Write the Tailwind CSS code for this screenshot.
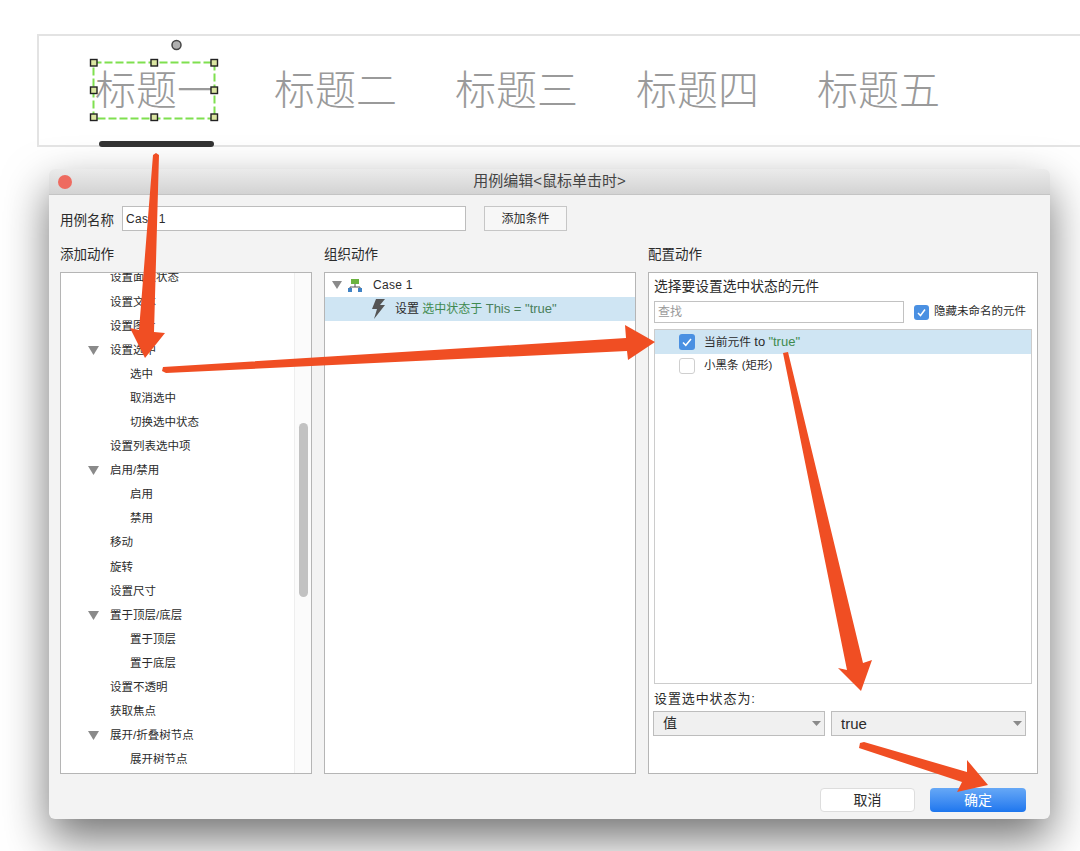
<!DOCTYPE html>
<html lang="zh-CN">

<head>
    <meta charset="UTF-8">
    <title>用例编辑</title>
    <script src="https://cdn.jsdelivr.net/npm/@tailwindcss/browser@4"></script>
</head>

<body class="bg-white overflow-hidden font-['Liberation_Sans','Noto_Sans_CJK_SC',sans-serif] text-[#2b2b2b]">
    <div class="relative w-[1080px] h-[851px] overflow-hidden pt-[34px]">

        <!-- Tabs -->
        <div class="relative ml-[37px] w-[1043px] h-[113px] border-2 border-r-0 border-[#e3e3e3] flex items-center pl-[56px] pt-[2px] gap-[58px] text-[41px] font-light text-[#9a9a9a]">
            <span class="mr-[-2px]">标题一</span>
            <span>标题二</span>
            <span>标题三</span>
            <span>标题四</span>
            <span>标题五</span>
            <div class="absolute left-[60px] top-[105px] w-[115px] h-[6px] rounded-full bg-[#333333]"></div>
        </div>

        <!-- Dialog -->
        <div class="ml-[49px] mt-[22px] w-[1001px] h-[650px] rounded-[6px] bg-[#f3f3f3] shadow-[0_20px_45px_rgba(0,0,0,0.55)] flex flex-col">
            <div class="relative h-[26px] shrink-0 rounded-t-[6px] bg-gradient-to-b from-[#ebebeb] to-[#d3d3d3] border-b border-[#c4c4c4] flex items-center justify-center text-[15px] text-[#444444]">
                <span class="absolute left-[9px] top-[6px] w-[14px] h-[14px] rounded-full bg-[#ee6b60]"></span>
                用例编辑&lt;鼠标单击时&gt;
            </div>

            <div class="flex items-center pl-[11px] pt-[11px] h-[36px] shrink-0">
                <span class="w-[62px] text-[13.5px] pt-[5px]">用例名称</span>
                <div class="w-[344px] h-[25px] bg-white border border-[#bdbdbd] pl-[3px] text-[12px] leading-[25px] tracking-[0.3px]">Case 1</div>
                <div class="ml-[18px] w-[83px] h-[25px] bg-[#f7f7f7] border border-[#c6c6c6] text-[12px] flex items-center justify-center">添加条件</div>
            </div>

            <div class="grid grid-cols-[252px_312px_390px] gap-x-3 pl-[11px] mt-[14px]">
                <div class="text-[13.5px] h-[27px] leading-[20px]">添加动作</div>
                <div class="text-[13.5px] h-[27px] leading-[20px]">组织动作</div>
                <div class="text-[13.5px] h-[27px] leading-[20px]">配置动作</div>

                <!-- 添加动作 -->
                <div class="relative h-[502px] bg-white border border-[#b5b5b5] overflow-hidden text-[11.5px]">
                    <div class="mt-[-7px] [&>div]:h-[24.1px] [&>div]:flex [&>div]:items-center">
                        <div class="pl-[49px]">设置面板状态</div>
                        <div class="pl-[49px]">设置文本</div>
                        <div class="pl-[49px]">设置图片</div>
                        <div class="pl-[27px]"><svg class="w-[11px] h-[9px] mr-[11px]" viewBox="0 0 11 9"><polygon points="0,0 11,0 5.5,9" fill="#8a8a8a" /></svg>设置选中</div>
                        <div class="pl-[69px]">选中</div>
                        <div class="pl-[69px]">取消选中</div>
                        <div class="pl-[69px]">切换选中状态</div>
                        <div class="pl-[49px]">设置列表选中项</div>
                        <div class="pl-[27px]"><svg class="w-[11px] h-[9px] mr-[11px]" viewBox="0 0 11 9"><polygon points="0,0 11,0 5.5,9" fill="#8a8a8a" /></svg>启用/禁用</div>
                        <div class="pl-[69px]">启用</div>
                        <div class="pl-[69px]">禁用</div>
                        <div class="pl-[49px]">移动</div>
                        <div class="pl-[49px]">旋转</div>
                        <div class="pl-[49px]">设置尺寸</div>
                        <div class="pl-[27px]"><svg class="w-[11px] h-[9px] mr-[11px]" viewBox="0 0 11 9"><polygon points="0,0 11,0 5.5,9" fill="#8a8a8a" /></svg>置于顶层/底层</div>
                        <div class="pl-[69px]">置于顶层</div>
                        <div class="pl-[69px]">置于底层</div>
                        <div class="pl-[49px]">设置不透明</div>
                        <div class="pl-[49px]">获取焦点</div>
                        <div class="pl-[27px]"><svg class="w-[11px] h-[9px] mr-[11px]" viewBox="0 0 11 9"><polygon points="0,0 11,0 5.5,9" fill="#8a8a8a" /></svg>展开/折叠树节点</div>
                        <div class="pl-[69px]">展开树节点</div>
                    </div>
                    <!-- scrollbar -->
                    <div class="absolute right-0 top-0 bottom-0 w-[17px] bg-[#fbfbfb] border-l border-[#eeeeee]">
                        <div class="absolute left-[4px] top-[150px] w-[9px] h-[174px] rounded-full bg-[#c2c2c2]"></div>
                    </div>
                </div>

                <!-- 组织动作 -->
                <div class="h-[502px] bg-white border border-[#b5b5b5] text-[12px]">
                    <div class="h-[24px] flex items-center pl-[7px]">
                        <svg class="w-[10px] h-[8px] mr-[6px]" viewBox="0 0 10 8"><polygon points="0,0 10,0 5,8" fill="#8a8a8a" /></svg>
                        <svg class="w-[14px] h-[13px] mr-[11px]" viewBox="0 0 14 13">
                            <rect x="3" y="0" width="8" height="5" fill="#6bb33f" />
                            <path d="M7 5v3M2 10V8h10v2" stroke="#555555" fill="none" />
                            <rect x="0" y="9" width="4" height="4" fill="#3f82c4" />
                            <rect x="10" y="9" width="4" height="4" fill="#3f82c4" />
                        </svg>
                        <span class="tracking-[0.3px]">Case 1</span>
                    </div>
                    <div class="h-[24px] bg-[#cfe5f3] flex items-center pl-[47px]">
                        <svg class="w-[13px] h-[20px] mr-[10px]" viewBox="0 0 13 20"><polygon points="4,0 13,0 8,6 13,6 2,20 5,10 0,10" fill="#555555" /></svg>
                        <span>设置&nbsp;<span class="text-[#3f8a4f]">选中状态于 <span class="text-[13px] text-[#4a7f5c]">This = "true"</span></span></span>
                    </div>
                </div>

                <!-- 配置动作 -->
                <div class="h-[502px] bg-white border border-[#b5b5b5] pl-[5px] pr-[5px] flex flex-col">
                    <div class="h-[28px] shrink-0 flex items-center text-[13.75px]">选择要设置选中状态的元件</div>
                    <div class="h-[22px] shrink-0 flex items-center">
                        <div class="w-[250px] h-[22px] border border-[#c2c2c2] pl-[3px] text-[12px] leading-[20px] text-[#9a9a9a]">查找</div>
                        <span class="ml-[10px] w-[15px] h-[15px] rounded-[3px] bg-[#4a90e2] flex items-center justify-center">
                            <svg class="w-[11px] h-[11px]" viewBox="0 0 11 11"><path d="M2 6l2.5 2.5L9 2.5" stroke="#ffffff" stroke-width="1.5" fill="none" /></svg>
                        </span>
                        <span class="ml-[5px] text-[11.5px] whitespace-nowrap">隐藏未命名的元件</span>
                    </div>
                    <div class="mt-[6px] w-[378px] h-[355px] shrink-0 border border-[#cccccc] text-[11.75px]">
                        <div class="h-[24px] bg-[#cfe5f3] flex items-center pl-[24px]">
                            <span class="w-[16px] h-[16px] rounded-[3px] bg-[#4a90e2] flex items-center justify-center">
                                <svg class="w-[12px] h-[12px]" viewBox="0 0 12 12"><path d="M2 6.5l2.8 2.8L10 3" stroke="#ffffff" stroke-width="1.5" fill="none" /></svg>
                            </span>
                            <span class="ml-[9px]">当前元件 <span class="text-[13px]">to</span> <span class="text-[#3f8a4f] text-[13px]">"true"</span></span>
                        </div>
                        <div class="h-[24px] flex items-center pl-[24px]">
                            <span class="w-[16px] h-[16px] rounded-[3px] bg-white border border-[#cfcfcf]"></span>
                            <span class="ml-[9px] text-[11.5px]">小黑条 (矩形)</span>
                        </div>
                    </div>
                    <div class="h-[24px] shrink-0 flex items-end text-[13px] tracking-[0.9px]">设置选中状态为:</div>
                    <div class="mt-[3px] flex gap-[6px] text-[14px] ml-[-1px]">
                        <div class="relative w-[172px] h-[25px] bg-[#f0f0f0] border border-[#bdbdbd] pl-[9px] leading-[23px]">值
                            <svg class="absolute right-[3px] top-[9px] w-[9px] h-[5px]" viewBox="0 0 9 5"><polygon points="0,0 9,0 4.5,5" fill="#8a8a8a" /></svg>
                        </div>
                        <div class="relative w-[195px] h-[25px] bg-[#f0f0f0] border border-[#bdbdbd] pl-[9px] leading-[23px] text-[15px]">true
                            <svg class="absolute right-[3px] top-[9px] w-[9px] h-[5px]" viewBox="0 0 9 5"><polygon points="0,0 9,0 4.5,5" fill="#8a8a8a" /></svg>
                        </div>
                    </div>
                </div>
            </div>

            <!-- Footer -->
            <div class="flex justify-end gap-[15px] pr-[24px] mt-[14px] text-[14px]">
                <div class="w-[95px] h-[24px] rounded-[4px] bg-white border border-[#dddddd] flex items-center justify-center">取消</div>
                <div class="w-[96px] h-[24px] rounded-[4px] bg-gradient-to-b from-[#66a8f6] to-[#1c76ee] text-white flex items-center justify-center">确定</div>
            </div>
        </div>

        <!-- Selection handles and arrows drawn over the page -->
        <svg class="absolute left-0 top-0 w-[1080px] h-[851px] pointer-events-none" viewBox="0 0 1080 851">
            <rect x="93.5" y="62.5" width="121" height="56" fill="none" stroke="#7fe04f" stroke-width="2" stroke-dasharray="8 3" />
            <g fill="#dbe6a2" stroke="#222222" stroke-width="1.4">
                <rect x="90.5" y="59.5" width="6.5" height="6.5" />
                <rect x="151" y="59.5" width="6.5" height="6.5" />
                <rect x="211" y="59.5" width="6.5" height="6.5" />
                <rect x="90.5" y="87" width="6.5" height="6.5" />
                <rect x="211" y="87" width="6.5" height="6.5" />
                <rect x="90.5" y="114" width="6.5" height="6.5" />
                <rect x="151" y="114" width="6.5" height="6.5" />
                <rect x="211" y="114" width="6.5" height="6.5" />
            </g>
            <circle cx="176.5" cy="45" r="4.5" fill="#b0b0b0" stroke="#444444" stroke-width="1.5" />
            <g fill="#f04e23">
                <polygon points="153,155 156,153 159,155 154,332 165,333 145,358 130,328 139,330" />
                <polygon points="163,367 626,338 625,325 655,342 628,360 627,351 166,373 162,371" />
                <polygon points="783,353 788,352 863,663 872,660 861,691 838,668 847,670" />
                <polygon points="860,743 864,742 967,772 967,760 988,785 957,792 962,782 859,748" />
            </g>
        </svg>
    </div>
</body>

</html>
